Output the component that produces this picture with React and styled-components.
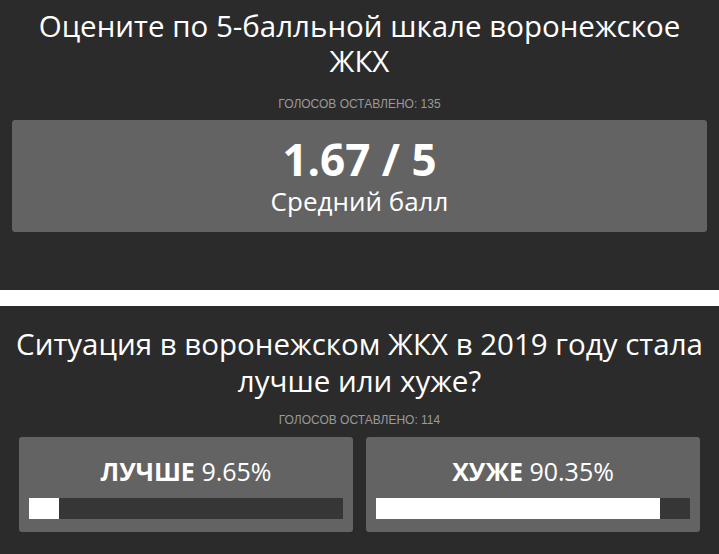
import React from 'react';
import styled, { createGlobalStyle } from 'styled-components';

const Global = createGlobalStyle`
  html, body { margin: 0; padding: 0; background: #ffffff; }
  body { font-family: "Open Sans", "Noto Sans", sans-serif; }
`;

const Page = styled.div`
  display: flex;
  flex-direction: column;
  gap: 16px;
`;

const Widget = styled.section`
  background: #2b2b2b;
  color: #ffffff;
  box-sizing: border-box;
  height: ${(p) => p.$height}px;
  padding: ${(p) => p.$pad};
  display: flex;
  flex-direction: column;
`;

const Title = styled.h2`
  margin: 0 ${(p) => p.$inset}px;
  font-weight: 400;
  text-align: center;
  font-size: ${(p) => p.$size}px;
  line-height: ${(p) => p.$lh}px;
`;

const VoteCount = styled.div`
  margin-top: ${(p) => p.$mt}px;
  text-align: center;
  font-family: "Liberation Sans Narrow", "Liberation Sans", sans-serif;
  font-size: 12px;
  line-height: 14px;
  color: #9a9a9a;
  text-transform: uppercase;
`;

const ScoreCard = styled.div`
  margin-top: 9px;
  height: 112px;
  box-sizing: border-box;
  background: #636363;
  border-radius: 3px;
  display: flex;
  flex-direction: column;
  align-items: center;
  padding-top: 17px;
`;

const Score = styled.div`
  font-weight: 700;
  font-size: 44px;
  line-height: 44px;
`;

const ScoreLabel = styled.div`
  margin-top: 4px;
  font-size: 26px;
  line-height: 32px;
`;

const Options = styled.div`
  margin-top: 10px;
  display: grid;
  grid-template-columns: 1fr 1fr;
  gap: 13px;
`;

const OptionCard = styled.div`
  background: #636363;
  border-radius: 3px;
  height: 95px;
  box-sizing: border-box;
  padding: 18px 10px 13px;
  display: flex;
  flex-direction: column;
  justify-content: space-between;
`;

const OptionText = styled.div`
  text-align: center;
  font-size: 25px;
  line-height: 32px;
  b { font-weight: 700; }
`;

const Bar = styled.div`
  height: 21px;
  background: #363636;
`;

const Fill = styled.div`
  height: 100%;
  background: #ffffff;
`;

const options = [
  { label: 'ЛУЧШЕ', value: 9.65 },
  { label: 'ХУЖЕ', value: 90.35 },
];

export default function App() {
  return (
    <>
      <Global />
      <Page>
        <Widget $height={290} $pad="8px 12px 0">
          <Title $size={29.5} $lh={35} $inset={0}>
            Оцените по 5-балльной шкале воронежское ЖКХ
          </Title>
          <VoteCount $mt={19}>Голосов оставлено: 135</VoteCount>
          <ScoreCard>
            <Score>1.67 / 5</Score>
            <ScoreLabel>Средний балл</ScoreLabel>
          </ScoreCard>
        </Widget>
        <Widget $height={260} $pad="19px 19px 0">
          <Title $size={29.5} $lh={37} $inset={-6}>
            Ситуация в воронежском ЖКХ в 2019 году стала лучше или хуже?
          </Title>
          <VoteCount $mt={14}>Голосов оставлено: 114</VoteCount>
          <Options>
            {options.map((o) => (
              <OptionCard key={o.label}>
                <OptionText>
                  <b>{o.label}</b> {o.value.toFixed(2)}%
                </OptionText>
                <Bar>
                  <Fill style={{ width: `${o.value}%` }} />
                </Bar>
              </OptionCard>
            ))}
          </Options>
        </Widget>
      </Page>
    </>
  );
}
